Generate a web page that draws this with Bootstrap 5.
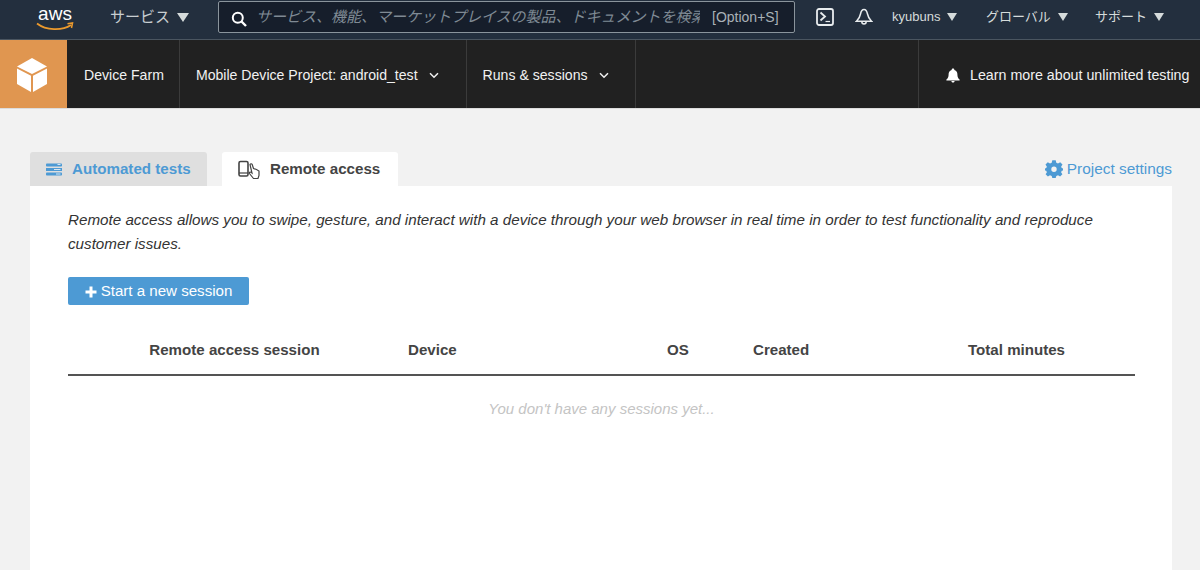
<!DOCTYPE html>
<html lang="ja">
<head>
<meta charset="utf-8">
<title>Device Farm</title>
<link rel="stylesheet" href="https://cdn.jsdelivr.net/npm/bootstrap@5.3.0/dist/css/bootstrap.min.css">
<style>
html,body{height:570px;overflow:hidden}
body{background:#f2f2f2;font-family:"Liberation Sans","Noto Sans CJK JP",sans-serif;color:#444;font-size:15px}
.topbar{height:40px;background:#232f3e;border-bottom:1px solid #4a5560;color:#d5dbdb;font-size:13px;white-space:nowrap;padding-bottom:5px}
.aws-logo{width:38px;margin-left:36px;margin-right:36px;flex:none;margin-top:2px}
.tri{display:inline-block;width:0;height:0;border-left:5.5px solid transparent;border-right:5.5px solid transparent;border-top:8px solid #d5dbdb;margin-left:7px}
.tri-lg{border-left-width:6.5px;border-right-width:6.5px;border-top-width:9px;margin-left:7px}
.svc{font-size:15px;color:#c8ced1;width:79px;flex:none}
.searchbox{width:577px;height:32px;margin-left:29px;background:#161e2b;border:1px solid #8a949c;border-radius:2px;flex:none;padding-left:12px}
.search-ph{width:444px;margin-left:9px;overflow:hidden;font-style:italic;color:#7f8a94;font-size:15px;flex:none;white-space:nowrap;padding-top:1px}
.search-key{color:#a9b1b7;font-size:14px;margin-left:12px;padding-top:1px}
.term{margin-left:21px;flex:none}
.bell{margin-left:21px;flex:none}
.tn1{margin-left:19px;width:94px;flex:none}
.tn2{width:109px;flex:none}
.subbar{height:69px;background:#212121;color:#f1f1f1;font-size:14.1px;white-space:nowrap;border-bottom:1px solid #dcdcdc}
.cube-box{width:67px;background:#e09650;flex:none;padding-top:1px}
.sub-item{border-right:1px solid #3b3b3b;padding:3px 26px 0 16px}
.sub-first{padding:3px 15px 0 17px}
.sub-second{padding-right:27px}
.sub-end{margin-left:auto;border-left:1px solid #3b3b3b;padding:3px 0 0 27px;width:282px;flex:none;font-size:14.25px;gap:10px}
.spacer{flex:1}
.chev{margin-left:11px}
.tabrow{padding:43px 28px 0 30px;height:77px}
.tab-a,.tab-b{height:34px;border-radius:3px 3px 0 0;font-weight:700;font-size:15.15px;padding-top:1px}
.tab-a{width:177px;background:#dfdfdf;color:#4d9ad4;padding-left:16px}
.tab-b{width:176px;margin-left:15px;background:#fff;color:#444;padding-left:16px}
.tab-ic{margin-right:10px;flex:none}
.proj-link{color:#4d9ad4;font-size:15.4px;text-decoration:none}
.panel{background:#fff;margin:0 28px 0 30px;height:384px;padding:22px 37px 0 38px}
.intro{font-style:italic;color:#333;font-size:15.2px;line-height:24px;margin:0;max-width:1040px}
.btn-start{background:#4d9ad4;color:#fff;border:0;border-radius:2px;width:181px;height:28px;margin-top:21px;font-size:15.1px;padding:1px 0 0;display:flex;align-items:center;justify-content:center;gap:4px}
.btn-start:hover{background:#4d9ad4;color:#fff}
.sess-head{display:grid;grid-template-columns:340px 259px 86px 215px 167px;height:71px;border-bottom:2px solid #545454;font-weight:700;color:#444;font-size:15.1px;padding-top:34px}
.c1{text-align:center;padding-right:7px;white-space:nowrap}
.empty-note{text-align:center;font-style:italic;color:#c4c4c4;font-size:15px;margin-top:22px}
</style>
</head>
<body>
<div class="topbar d-flex align-items-center">
  <svg class="aws-logo" viewBox="0 0 38 30" height="30" aria-hidden="true">
    <text x="19" y="17" text-anchor="middle" font-family="Liberation Sans" font-size="19" fill="#fff">aws</text>
    <path d="M1 20.500C10 27.500 26 28 35 22" fill="none" stroke="#ec9a2d" stroke-width="1.800"/>
    <path d="M31.500 20.800L36.500 20L35.500 25" fill="none" stroke="#ec9a2d" stroke-width="1.500"/>
  </svg>
  <div class="svc">サービス<span class="tri tri-lg"></span></div>
  <div class="searchbox d-flex align-items-center">
    <svg width="16" height="16" viewBox="0 0 16 16" class="mt-1" aria-hidden="true"><circle cx="6.800" cy="6.800" r="5" fill="none" stroke="#fff" stroke-width="2"/><path d="M10.500 10.500L15 15" stroke="#fff" stroke-width="2.400"/></svg>
    <div class="search-ph">サービス、機能、マーケットプレイスの製品、ドキュメントを検索</div>
    <div class="search-key">[Option+S]</div>
  </div>
  <svg class="term" width="18" height="18" viewBox="0 0 18 18" aria-hidden="true"><rect x="1" y="1" width="16" height="16" rx="2" fill="none" stroke="#e8ecee" stroke-width="1.800"/><path d="M4.500 4.500L9 8.500L4.500 12.500" fill="none" stroke="#e8ecee" stroke-width="1.800"/><path d="M9.500 13.500H14" stroke="#e8ecee" stroke-width="1.200"/></svg>
  <svg class="bell" width="18" height="18" viewBox="0 0 18 18" aria-hidden="true"><path d="M9 1.500C6.500 1.500 6 3.500 5.500 6C5 8.800 4 10.800 1.500 13.200H16.500C14 10.800 13 8.800 12.500 6C12 3.500 11.500 1.500 9 1.500Z" fill="none" stroke="#e8ecee" stroke-width="1.500"/><path d="M6.800 13.500C6.800 16.800 11.200 16.800 11.200 13.500" fill="none" stroke="#e8ecee" stroke-width="1.500"/></svg>
  <div class="tn1">kyubuns<span class="tri"></span></div>
  <div class="tn2">グローバル<span class="tri"></span></div>
  <div>サポート<span class="tri"></span></div>
</div>
<div class="subbar d-flex">
  <div class="cube-box d-flex align-items-center justify-content-center">
    <svg width="32" height="36" viewBox="0 0 32 36" class="me-1" aria-hidden="true"><path d="M16 1L31 9.500L16 17L1 9.500Z" fill="#fff"/><path d="M1 11.500L15 18.800V35L1 27Z" fill="#fff"/><path d="M31 11.500L17 18.800V35L31 27Z" fill="#fff"/></svg>
  </div>
  <div class="sub-item sub-first d-flex align-items-center">Device Farm</div>
  <div class="sub-item sub-second d-flex align-items-center">Mobile Device Project: android_test
    <svg class="chev" width="10" height="7" viewBox="0 0 10 7" aria-hidden="true"><path d="M1 1.200L5 5.200L9 1.200" fill="none" stroke="#f1f1f1" stroke-width="1.500"/></svg>
  </div>
  <div class="sub-item d-flex align-items-center">Runs &amp; sessions
    <svg class="chev" width="10" height="7" viewBox="0 0 10 7" aria-hidden="true"><path d="M1 1.200L5 5.200L9 1.200" fill="none" stroke="#f1f1f1" stroke-width="1.500"/></svg>
  </div>
  <div class="spacer"></div>
  <div class="sub-end d-flex align-items-center">
    <svg width="14" height="15" viewBox="0 0 14 15" aria-hidden="true"><path d="M7 0.500C8 0.500 8.400 1.200 8.400 2C10.600 2.600 11.400 4.400 11.400 6.500C11.400 9 12.200 10.400 13.600 11.600V12.400H0.400V11.600C1.800 10.400 2.600 9 2.600 6.500C2.600 4.400 3.400 2.600 5.600 2C5.600 1.200 6 0.500 7 0.500ZM5.400 13H8.600C8.400 15 5.600 15 5.400 13Z" fill="#fff"/></svg>
    <span>Learn more about unlimited testing</span>
  </div>
</div>
<div class="tabrow d-flex">
  <div class="tab-a d-flex align-items-center">
    <svg width="16" height="13" viewBox="0 0 16 13" class="tab-ic" aria-hidden="true"><rect y="0.500" width="16" height="3" rx="0.800" fill="#4d9ad4"/><rect y="5" width="16" height="3" fill="#4d9ad4"/><rect y="9.500" width="16" height="3" rx="0.800" fill="#4d9ad4"/><path d="M11.500 1.500H14.500M8 6.500H14.500M10 11H14.500" stroke="#d4e6f4"/></svg>
    <span>Automated tests</span>
  </div>
  <div class="tab-b d-flex align-items-center">
    <svg width="22" height="20" viewBox="0 0 22 20" class="tab-ic" aria-hidden="true"><rect x="1" y="1.500" width="9" height="14.500" rx="1.500" fill="none" stroke="#444" stroke-width="1.600"/><path d="M1 13H10" stroke="#444" stroke-width="1.200"/><path d="M12 4.500C12.500 3.500 13.800 3.500 14.200 4.500L15.500 8.500L18.500 9.500L21 11V15.500L20 18.500H15.500L11.500 13.500C11 12.500 12 11.800 13 12.300L14 13Z" fill="#fff" stroke="#444" stroke-width="1.200"/></svg>
    <span>Remote access</span>
  </div>
  <a class="proj-link ms-auto d-flex align-items-center" href="#">
    <svg width="18" height="18" viewBox="0 0 18 18" class="me-1" aria-hidden="true"><path d="M7.300 0.300H10.700L11.300 2.800L13 3.500L15.200 2.200L17.500 4.600L16.100 6.700L16.800 8.100L18 8.500V10.500L16.800 10.800L16.100 12.200L17.400 14.300L15.100 16.500L13 15.200L11.300 15.900L10.700 18H7.300L6.700 15.900L5 15.200L2.900 16.500L0.600 14.300L1.900 12.200L1.200 10.800L0 10.500V8.500L1.200 8.100L1.900 6.700L0.500 4.600L2.800 2.200L5 3.500L6.700 2.800Z M9 6.500A2.700 2.700 0 1 0 9 11.900A2.700 2.700 0 1 0 9 6.500Z" fill="#4d9ad4" fill-rule="evenodd"/></svg>
    <span>Project settings</span>
  </a>
</div>
<div class="panel">
  <p class="intro">Remote access allows you to swipe, gesture, and interact with a device through your web browser in real time in order to test functionality and reproduce customer issues.</p>
  <button type="button" class="btn btn-start">
    <svg width="12" height="12" viewBox="0 0 12 12" aria-hidden="true"><path d="M4.500 0.500H7.500V4.500H11.500V7.500H7.500V11.500H4.500V7.500H0.500V4.500H4.500Z" fill="#fff"/></svg>
    <span>Start a new session</span>
  </button>
  <div class="sess-head">
    <div class="c1">Remote access session</div>
    <div>Device</div>
    <div>OS</div>
    <div>Created</div>
    <div>Total minutes</div>
  </div>
  <div class="empty-note">You don't have any sessions yet...</div>
</div>
<script src="https://cdn.jsdelivr.net/npm/bootstrap@5.3.0/dist/js/bootstrap.bundle.min.js"></script>
</body>
</html>
